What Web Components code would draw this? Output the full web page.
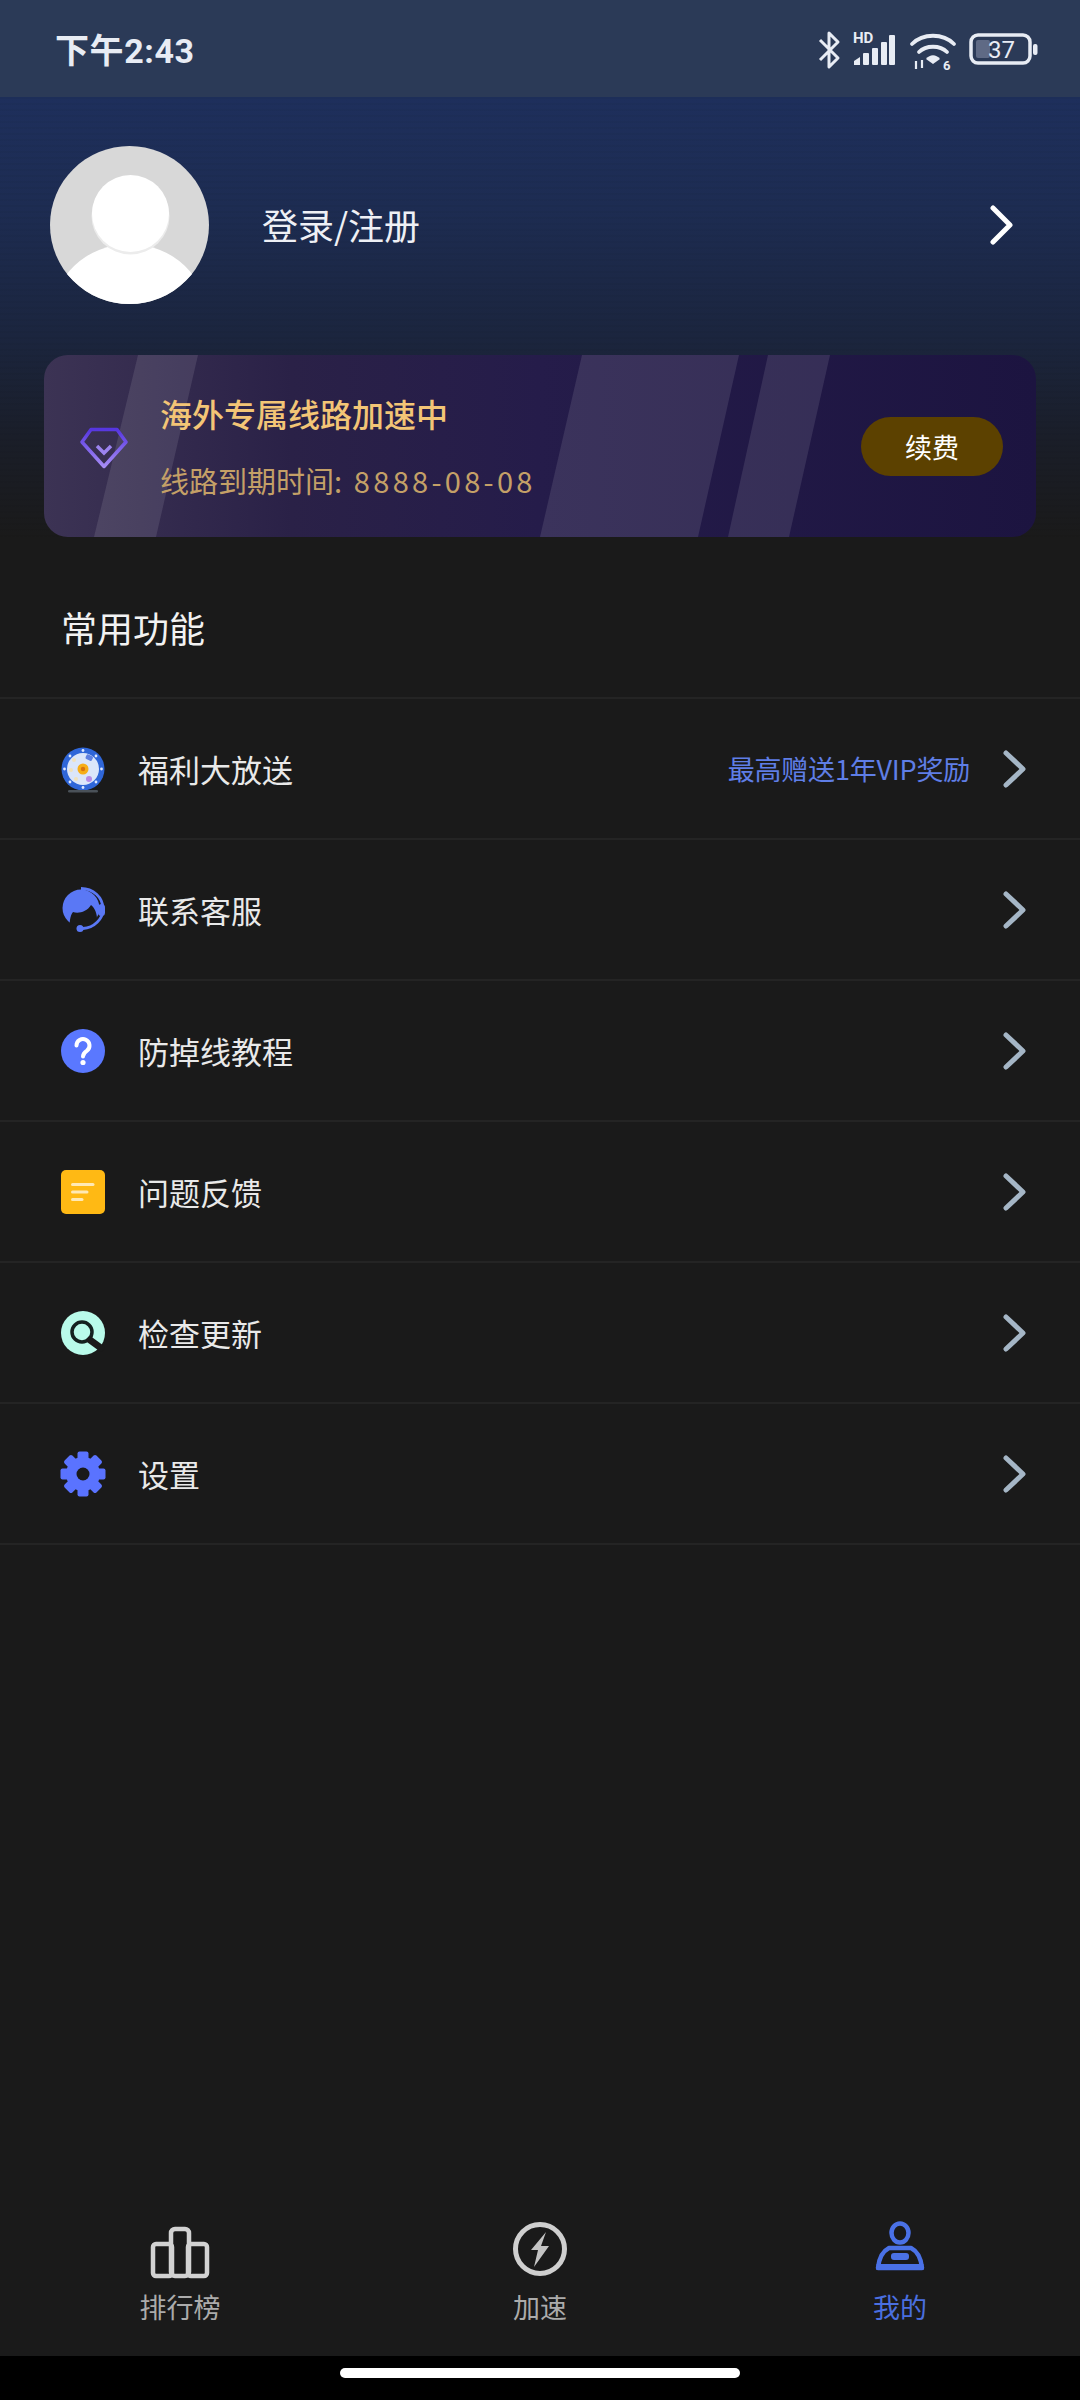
<!DOCTYPE html>
<html lang="zh-CN"><head><meta charset="utf-8"><title>我的</title>
<style>
html,body{margin:0;padding:0;background:#1a1a1a}
body{width:1080px;height:2400px;overflow:hidden;font-family:"Noto Sans CJK SC","Noto Sans",sans-serif}
</style></head><body>
<app-page>
  <status-bar></status-bar>
  <hero-panel>
    <profile-row></profile-row>
    <vip-card></vip-card>
  </hero-panel>
  <section-title>常用功能</section-title>
  <menu-list>
    <menu-row label="福利大放送" hint="最高赠送1年VIP奖励">
      <svg slot="icon" width="46" height="50" viewBox="0 0 46 50">
        <circle cx="23" cy="23" r="21.5" fill="#2f66d8"/>
        <circle cx="23" cy="23" r="16" fill="#dbe6fa"/>
        <g fill="#dfe9ff"><circle cx="23" cy="4.500" r="1.400"/><circle cx="23" cy="41.500" r="1.400"/><circle cx="4.500" cy="23" r="1.400"/><circle cx="41.500" cy="23" r="1.400"/><circle cx="10" cy="10" r="1.400"/><circle cx="36" cy="10" r="1.400"/><circle cx="10" cy="36" r="1.400"/><circle cx="36" cy="36" r="1.400"/></g>
        <circle cx="23" cy="23" r="5.500" fill="#f7ae18"/><circle cx="23" cy="23" r="2.200" fill="#d9740f"/>
        <rect x="26" y="9" width="7" height="5" rx="1.500" fill="#5f80e0" transform="rotate(25 29 11)"/>
        <circle cx="29" cy="33" r="3" fill="#b58ae6"/>
        <circle cx="14" cy="14" r="2" fill="#f0e2bc"/><circle cx="11" cy="24" r="2" fill="#f0e2bc"/><circle cx="16" cy="33" r="2" fill="#f0e2bc"/>
        <rect x="8" y="44" width="30" height="2.500" rx="1.250" fill="#4a5158"/>
      </svg>
    </menu-row>
    <menu-row label="联系客服">
      <svg slot="icon" width="46" height="46" viewBox="0 0 46 46">
        <circle cx="21" cy="21" r="18.500" fill="#5a78f5"/>
        <path d="M10 42c-1-5 0-14 3-17 5 2 14 0 18-7 4 3 6 9 6 14l-4 9-12 4z" fill="#1a1a1a"/>
        <path d="M21 1.500C33 1.500 43 10 43 22c0 10-9 19-20 19.500" fill="none" stroke="#5a78f5" stroke-width="2.800"/>
        <circle cx="20" cy="41.500" r="3.500" fill="#5a78f5"/>
        <rect x="38" y="17" width="7" height="12" rx="3.500" fill="#5a78f5"/>
      </svg>
    </menu-row>
    <menu-row label="防掉线教程">
      <svg slot="icon" width="46" height="46" viewBox="0 0 46 46">
        <circle cx="23" cy="23" r="22" fill="#5a78ff"/>
        <path d="M16.500 17.500a6.500 6.500 0 1 1 10.500 5.200c-2.500 1.800-4 3-4 5.800" fill="none" stroke="#fff" stroke-width="4" stroke-linecap="round"/>
        <circle cx="23" cy="34.500" r="2.600" fill="#fff"/>
      </svg>
    </menu-row>
    <menu-row label="问题反馈">
      <svg slot="icon" width="46" height="46" viewBox="0 0 46 46">
        <rect x="1" y="1" width="44" height="44" rx="5" fill="#ffb914"/>
        <g stroke="#ffe9b5" stroke-width="3" stroke-linecap="round"><path d="M12.500 15.500H33"/><path d="M12.500 23H27"/><path d="M12.500 30.500H22"/></g>
      </svg>
    </menu-row>
    <menu-row label="检查更新">
      <svg slot="icon" width="46" height="46" viewBox="0 0 46 46">
        <circle cx="23" cy="23" r="22" fill="#b9fbea"/>
        <circle cx="22" cy="22" r="10" fill="none" stroke="#14211f" stroke-width="3.500"/>
        <path d="M30 30l11 8" stroke="#1a1a1a" stroke-width="7" stroke-linecap="round"/>
      </svg>
    </menu-row>
    <menu-row label="设置">
      <svg slot="icon" width="46" height="46" viewBox="0 0 46 46">
        <g fill="#5a73ff"><g><rect x="17.500" y="0.500" width="11" height="10" rx="2"/><rect x="17.500" y="35.500" width="11" height="10" rx="2"/><rect x="0.500" y="17.500" width="10" height="11" rx="2"/><rect x="35.500" y="17.500" width="10" height="11" rx="2"/></g>
        <g transform="rotate(45 23 23)"><rect x="17.500" y="0.500" width="11" height="10" rx="2"/><rect x="17.500" y="35.500" width="11" height="10" rx="2"/><rect x="0.500" y="17.500" width="10" height="11" rx="2"/><rect x="35.500" y="17.500" width="10" height="11" rx="2"/></g>
        <circle cx="23" cy="23" r="17"/></g>
        <circle cx="23" cy="23" r="6.500" fill="#1a1a1a"/>
      </svg>
    </menu-row>
  </menu-list>
  <tab-bar>
    <tab-item label="排行榜">
      <svg width="60" height="60" viewBox="0 0 60 60" fill="none" stroke="#d2d2d2" stroke-width="4.500" stroke-linejoin="round">
        <rect x="3" y="24" width="19" height="32" rx="3"/><rect x="21" y="9" width="18" height="47" rx="4"/><rect x="38" y="24" width="19" height="32" rx="3"/>
      </svg>
    </tab-item>
    <tab-item label="加速">
      <svg width="56" height="60" viewBox="0 0 56 60">
        <circle cx="28" cy="29" r="24.500" fill="none" stroke="#cfcfcf" stroke-width="5"/>
        <path d="M34 12L19 30h7l-4 17 15-21h-8z" fill="#c4c4c4"/>
      </svg>
    </tab-item>
    <tab-item label="我的" active>
      <svg width="50" height="60" viewBox="0 0 50 60">
        <ellipse cx="25" cy="13" rx="8.500" ry="9.500" fill="none" stroke="#4a71e6" stroke-width="4.500"/>
        <path d="M14 28h22c6 3 10 10 11 20H3C4 38 8 31 14 28z" fill="none" stroke="#4a71e6" stroke-width="4.500" stroke-linejoin="round"/>
        <path d="M1.500 44h47v6h-47z" fill="#4a71e6"/>
        <rect x="16" y="33" width="18" height="7" rx="3" fill="#4a71e6"/>
      </svg>
    </tab-item>
  </tab-bar>
  <home-indicator></home-indicator>
</app-page>
<script>
function el(name, css, html){
  customElements.define(name, class extends HTMLElement{
    constructor(){super();const r=this.attachShadow({mode:"open"});
      r.innerHTML="<style>"+css+"</style>"+(typeof html==="function"?html(this):html);}
  });
}
el("app-page",":host{display:flex;flex-direction:column;width:1080px;height:2400px;background:#1a1a1a;color:#fff}","<slot></slot>");
el("status-bar",`:host{display:flex;align-items:flex-start;justify-content:space-between;height:97px;box-sizing:border-box;padding:26px 42px 0 55px;background:#2b3a57;color:#e8ecf4}
.t{font-size:34px;font-weight:700;line-height:46px;letter-spacing:.6px;padding-top:2px;font-family:"Roboto","Noto Sans CJK SC",sans-serif}
svg{display:block;margin-top:3px}text{font-family:"Roboto",sans-serif;fill:#e8ecf4}`,
`<span class="t">下午2:43</span>
<svg width="222" height="44" viewBox="0 0 222 44">
<path d="M4 11l18 18-9 9V4l9 9L4 31" fill="none" stroke="#e8ecf4" stroke-width="3" stroke-linejoin="round"/>
<text x="37" y="14" font-size="15" font-weight="700">HD</text>
<g fill="#e8ecf4"><path d="M38 32l6-4v8h-6z"/><rect x="47" y="24" width="6" height="12" rx="1"/><rect x="56" y="19" width="6" height="17" rx="1"/><rect x="65" y="13" width="6" height="23" rx="1"/><rect x="73" y="6" width="6" height="30" rx="1"/></g>
<g fill="none" stroke="#e8ecf4" stroke-width="3.800" stroke-linecap="round"><path d="M96 15c11-11 31-11 42 0"/><path d="M103 23c7-7 21-7 28 0"/></g>
<path d="M110 30c4-5 10-5 14 0l-7 5z" fill="#e8ecf4"/>
<text x="127" y="41" font-size="13" font-weight="700">6</text>
<path d="M100 32v8M106 31v8" stroke="#e8ecf4" stroke-width="2.200"/>
<rect x="155" y="6" width="59" height="28" rx="7" fill="none" stroke="#e8ecf4" stroke-width="3.500"/>
<rect x="160" y="11" width="14" height="18" rx="2" fill="#5f6a85"/>
<text x="172" y="29" font-size="24">37</text>
<rect x="217" y="15" width="4.500" height="11" rx="2" fill="#e8ecf4"/></svg>`);
el("hero-panel",`:host{display:block;height:440px;box-sizing:border-box;padding:49px 0 0;background:repeating-linear-gradient(rgba(0,0,0,.03) 0 2px,transparent 2px 6px),linear-gradient(#1e2f5c 0,#1d2c52 110px,#1b253e 240px,#1a1e29 340px,#1a1a1a 440px)}`,"<slot></slot>");
el("profile-row",`:host{display:flex;align-items:center;height:158px;padding:0 66px 0 50px}
.a{width:159px;height:158px;border-radius:50%;background:#d8d8d8;overflow:hidden;flex:none;display:block}
.n{flex:1;margin-left:53px;font-size:36px;line-height:48px;color:#eef0f5;position:relative;top:-1px}svg{display:block}`,
`<svg class="a" viewBox="0 0 158 158"><ellipse cx="79" cy="172" rx="78" ry="74" fill="#fff"/><ellipse cx="80" cy="70" rx="39" ry="38.500" fill="#ececec"/><circle cx="80" cy="67.500" r="38.500" fill="#fff"/></svg>
<span class="n">登录/注册</span>
<svg width="24" height="40" viewBox="0 0 24 40"><path d="M3 3l17 17L3 37" fill="none" stroke="#fff" stroke-width="5" stroke-linecap="round" stroke-linejoin="round"/></svg>`);
el("vip-card",`:host{display:flex;align-items:center;position:relative;overflow:hidden;box-sizing:border-box;width:992px;height:182px;margin:51px 0 0 44px;padding:0 33px 0 36px;border-radius:24px;background:linear-gradient(90deg,#3c3354 0,#2a2147 25%,#251c4a 50%,#1c1440 100%)}
.s{position:absolute;left:0;top:0}
.d{flex:none;position:relative;top:2px;display:block}
.c{position:relative;flex:1;margin-left:32px;display:flex;flex-direction:column;gap:23px}
.a{font-size:32px;line-height:44px;font-weight:500;color:#f3c576;position:relative;top:-2px}
.b{font-size:29px;line-height:40px;color:#c4a067}
.b span{letter-spacing:3.300px;margin-left:2px}
.btn{position:relative;flex:none;width:142px;height:59px;border-radius:30px;background:#5c4100;color:#fff;font-size:27px;display:flex;align-items:center;justify-content:center}`,
`<svg class="s" width="992" height="182"><polygon points="94,0 154,0 112,182 50,182" fill="#fff" fill-opacity=".1"/><polygon points="538,0 695,0 654,182 496,182" fill="#fff" fill-opacity=".1"/><polygon points="724,0 786,0 745,182 684,182" fill="#fff" fill-opacity=".1"/></svg>
<svg class="d" width="48" height="42" viewBox="0 0 48 42" fill="none"><defs><linearGradient id="g" x1="0" y1="0" x2="0" y2="1"><stop offset="0" stop-color="#5636e0"/><stop offset="1" stop-color="#a68cf5"/></linearGradient></defs>
<path d="M11 2.500h26L46 15 24 39.500 2 15z" stroke="url(#g)" stroke-width="3.500" stroke-linejoin="round"/><path d="M17 19l7 7 7-7" stroke="#9c83f0" stroke-width="3.500"/></svg>
<div class="c"><div class="a">海外专属线路加速中</div><div class="b">线路到期时间:<span> 8888-08-08</span></div></div>
<div class="btn">续费</div>`);
el("section-title",`:host{display:block;box-sizing:border-box;height:160px;padding:67px 0 0 61px;font-size:36px;line-height:46px;color:#f2f2f2}`,"<slot></slot>");
el("menu-list",`:host{display:block;border-top:2px solid #242424;flex:none}`,"<slot></slot>");
el("menu-row",`:host{display:flex;align-items:center;box-sizing:border-box;height:141px;border-bottom:2px solid #242424;padding:0 53px 0 60px}
.i{width:46px;height:46px;flex:none;display:flex;align-items:flex-start;position:relative;top:0}
.l{margin-left:32px;font-size:31px;line-height:44px;color:#e9e9e9;flex:1}
.h{font-size:27px;line-height:40px;letter-spacing:-.2px;color:#5f7ee6;margin-right:33px}
.c{display:block;flex:none}`,
h=>`<span class="i"><slot name="icon"></slot></span><span class="l">${h.getAttribute("label")}</span>${h.getAttribute("hint")?`<span class="h">${h.getAttribute("hint")}</span>`:""}<svg class="c" width="24" height="40" viewBox="0 0 24 40"><path d="M3 4l17 16L3 36" fill="none" stroke="#a5b6c6" stroke-width="5" stroke-linecap="round" stroke-linejoin="round"/></svg>`);
el("tab-bar",`:host{display:grid;grid-template-columns:repeat(3,360px);box-sizing:border-box;margin-top:auto;height:140px;background:#1a1a1a;padding-top:4px}`,"<slot></slot>");
el("tab-item",`:host{display:flex;flex-direction:column;align-items:center;color:#ababab;font-size:27px;line-height:36px}
:host([active]){color:#4a6fe0}.i{height:60px;display:flex;align-items:flex-end;margin-bottom:9px}`,
h=>`<span class="i"><slot></slot></span><span>${h.getAttribute("label")}</span>`);
el("home-indicator",`:host{display:flex;justify-content:center;align-items:flex-start;box-sizing:border-box;height:44px;padding-top:12px;background:#000}
i{display:block;width:400px;height:10px;border-radius:5px;background:#fff}`,"<i></i>");
</script>
</body></html>
